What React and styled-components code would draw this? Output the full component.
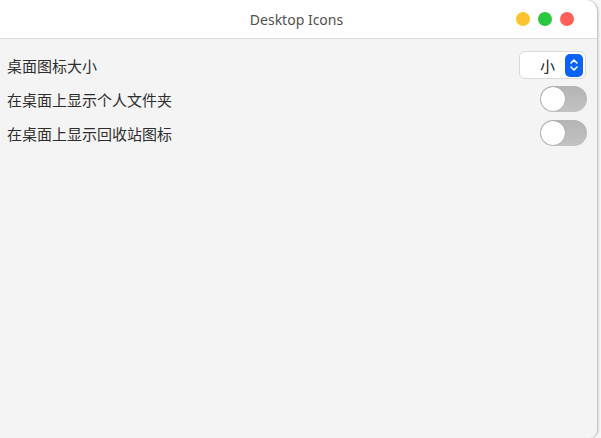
import React from "react";
import styled, { createGlobalStyle } from "styled-components";

const Global = createGlobalStyle`
  html, body { margin: 0; padding: 0; background: #f7f7f7; }
  body { width: 601px; height: 438px; overflow: hidden; font-family: "Noto Sans CJK SC", "Noto Sans", sans-serif; }
`;

const Desk = styled.div`
  width: 601px;
  height: 438px;
  display: flex;
  background: #f7f7f7;
`;

const Window = styled.div`
  width: 597px;
  height: 438px;
  display: flex;
  flex-direction: column;
  border-radius: 0 12px 8px 0;
  overflow: hidden;
  background: #f4f4f4;
  box-shadow: 1px 0 0 #c8c8c8, 2px 0 2px rgba(0,0,0,0.12);
`;

const TitleBar = styled.div`
  height: 38px;
  flex: none;
  background: #ffffff;
  border-bottom: 1px solid #dadada;
  display: flex;
  align-items: center;
  justify-content: center;
  position: relative;
`;

const Title = styled.div`
  font-family: "Noto Sans", "Open Sans", sans-serif;
  font-size: 14px;
  color: #505050;
  margin-left: -4px;
`;

const Lights = styled.div`
  position: absolute;
  right: 23px;
  top: 12px;
  display: flex;
  gap: 8px;
`;

const Light = styled.span`
  width: 14px;
  height: 14px;
  border-radius: 50%;
  background: ${(p) => p.$c};
`;

const Content = styled.div`
  padding: 9px 10px 0 7px;
  display: flex;
  flex-direction: column;
`;

const Row = styled.div`
  height: 34px;
  display: flex;
  align-items: center;
  justify-content: space-between;
`;

const Label = styled.span`
  font-size: 15px;
  color: #2e2e2e;
`;

const Select = styled.div`
  width: 67px;
  height: 28px;
  box-sizing: border-box;
  border: 1px solid #d9d9d9;
  border-radius: 6px;
  background: #fff;
  display: flex;
  align-items: center;
  justify-content: space-between;
  padding: 0 2px 0 20px;
  margin-right: 1px;
`;

const SelectText = styled.span`
  font-size: 15px;
  color: #222;
`;

const Stepper = styled.span`
  width: 18px;
  height: 23px;
  border-radius: 5px;
  background: #0b63f6;
  display: flex;
  align-items: center;
  justify-content: center;
`;

const Track = styled.div`
  width: 47px;
  height: 26px;
  border-radius: 13px;
  background: linear-gradient(#b4b4b4, #c2c2c2);
  position: relative;
  box-sizing: border-box;
`;

const Knob = styled.span`
  position: absolute;
  left: 1px;
  top: 1px;
  width: 24px;
  height: 24px;
  border-radius: 50%;
  background: #fff;
  box-shadow: 0 0 1px rgba(0,0,0,0.4);
`;

const Toggle = () => (
  <Track>
    <Knob />
  </Track>
);

export default function App() {
  return (
    <>
      <Global />
      <Desk>
        <Window>
          <TitleBar>
            <Title>Desktop Icons</Title>
            <Lights>
              <Light $c="#fdc22d" />
              <Light $c="#28c840" />
              <Light $c="#fe5f57" />
            </Lights>
          </TitleBar>
          <Content>
            <Row>
              <Label>桌面图标大小</Label>
              <Select>
                <SelectText>小</SelectText>
                <Stepper>
                  <svg width="10" height="16" viewBox="0 0 10 16" fill="none" stroke="#fff" strokeWidth="1.6" strokeLinecap="round" strokeLinejoin="round">
                    <path d="M2 6 L5 3 L8 6" />
                    <path d="M2 10 L5 13 L8 10" />
                  </svg>
                </Stepper>
              </Select>
            </Row>
            <Row>
              <Label>在桌面上显示个人文件夹</Label>
              <Toggle />
            </Row>
            <Row>
              <Label>在桌面上显示回收站图标</Label>
              <Toggle />
            </Row>
          </Content>
        </Window>
      </Desk>
    </>
  );
}
